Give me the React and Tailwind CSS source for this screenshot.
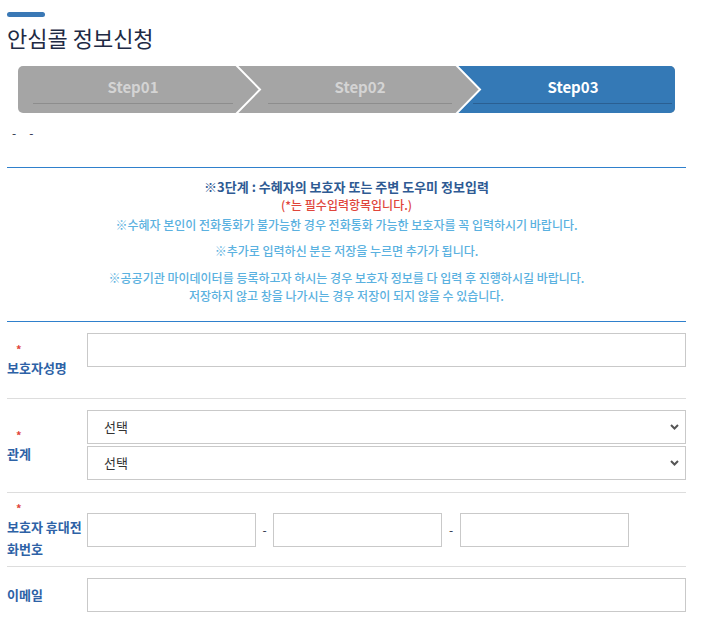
import { useState } from "react";

const Req = () => (
  <div className="pl-[9px] text-[11px] leading-[16px] text-[#e0453b]">*</div>
);

const Label = ({ required, children }) => (
  <div className="w-[80px] shrink-0 text-[13px] font-bold leading-[22px] text-[#2d62a6]">
    {required && <Req />}
    <div>{children}</div>
  </div>
);

const Field = ({ className = "" }) => (
  <input
    type="text"
    className={`h-[34px] border border-[#c9c9c9] bg-white px-2 text-[13px] outline-none ${className}`}
  />
);

const Select = ({ value, onChange }) => (
  <div className="relative">
    <select
      value={value}
      onChange={(e) => onChange(e.target.value)}
      className="h-[34px] w-full appearance-none border border-[#c9c9c9] bg-white pl-[16px] text-[13px] text-[#333] outline-none"
    >
      <option value="">선택</option>
      <option value="parent">부모</option>
      <option value="child">자녀</option>
      <option value="etc">기타</option>
    </select>
    <svg
      className="pointer-events-none absolute right-[7px] top-[14px]"
      width="9"
      height="6"
      viewBox="0 0 9 6"
    >
      <polyline points="1,1 4.5,4.5 8,1" fill="none" stroke="#555" strokeWidth="2" />
    </svg>
  </div>
);

const steps = [
  { name: "Step01", seg: "w-[230px]", text: "", line: "mx-[15px]" },
  { name: "Step02", seg: "w-[208px]", text: "pl-[16px]", line: "ml-[20px] mr-[4px]" },
];

export default function App() {
  const [rel1, setRel1] = useState("");
  const [rel2, setRel2] = useState("");

  return (
    <div className="min-h-screen bg-white font-['Noto_Sans_CJK_KR','Noto_Sans',sans-serif] text-[#333]">
      <div className="ml-[7px] w-[679px] pt-[12px]">
        {/* title */}
        <div className="h-[5px] w-[38px] rounded-full bg-[#3a78b5]" />
        <h1 className="mt-[8px] text-[22px] font-normal leading-[24px] text-[#1e2a44]">
          안심콜 정보신청
        </h1>

        {/* steps */}
        <div className="relative mx-[11px] mt-[17px] flex h-[47px] overflow-hidden rounded-[5px] bg-[#a5a5a5]">
          {steps.map((s) => (
            <div key={s.name} className={`flex shrink-0 flex-col pt-[11px] ${s.seg}`}>
              <span className={`text-center text-[15px] font-bold leading-[20px] text-[#d4d4d4] ${s.text}`}>
                {s.name}
              </span>
              <div className={`mt-[6px] border-b border-[#8d8d8d] ${s.line}`} />
            </div>
          ))}
          <div className="flex flex-1 flex-col bg-[#3479b6] pt-[11px] [clip-path:polygon(0_0,100%_0,100%_100%,0_100%,24px_50%)]">
            <span className="pl-[15px] text-center text-[15px] font-bold leading-[20px] text-white">
              Step03
            </span>
            <div className="ml-[17px] mr-[3px] mt-[6px] border-b border-[#2a5f92]" />
          </div>
          <svg className="pointer-events-none absolute inset-0" width="657" height="47" viewBox="0 0 657 47">
            <polyline points="218,-1 242,23.5 218,48" fill="none" stroke="#fff" strokeWidth="2" />
            <polyline points="438,-1 462,23.5 438,48" fill="none" stroke="#fff" strokeWidth="2" />
          </svg>
        </div>

        <div className="mt-[13px] flex gap-[13px] pl-[5px] text-[12px] leading-[14px] text-[#1e2a44]">
          <span>-</span>
          <span>-</span>
        </div>

        {/* notice */}
        <div className="mt-[27px] h-px bg-[#2f80cc]" />
        <div className="pb-[16px] pt-[10px] text-center text-[12px] font-medium leading-[18px] text-[#5ab1e0]">
          <p className="text-[13px] font-bold text-[#2e5a93]">
            ※3단계 : 수혜자의 보호자 또는 주변 도우미 정보입력
          </p>
          <p className="text-[#e0453b]">(*는 필수입력항목입니다.)</p>
          <p className="mt-[2px]">
            ※수혜자 본인이 전화통화가 불가능한 경우 전화통화 가능한 보호자를 꼭 입력하시기 바랍니다.
          </p>
          <p className="mt-[8px]">※추가로 입력하신 분은 저장을 누르면 추가가 됩니다.</p>
          <p className="mt-[9px]">
            ※공공기관 마이데이터를 등록하고자 하시는 경우 보호자 정보를 다 입력 후 진행하시길 바랍니다.
            <br />
            저장하지 않고 창을 나가시는 경우 저장이 되지 않을 수 있습니다.
          </p>
        </div>
        <div className="h-px bg-[#2f80cc]" />

        {/* form */}
        <div className="flex items-center border-b border-[#dddddd]">
          <Label required>보호자성명</Label>
          <div className="flex-1 pb-[11px] pt-[11px]">
            <Field className="w-full" />
            <div className="h-[20px]" />
          </div>
        </div>

        <div className="flex items-center border-b border-[#dddddd]">
          <Label required>관계</Label>
          <div className="flex flex-1 flex-col gap-[2px] pb-[12px] pt-[11px]">
            <Select value={rel1} onChange={setRel1} />
            <Select value={rel2} onChange={setRel2} />
          </div>
        </div>

        <div className="flex items-center border-b border-[#dddddd]">
          <Label required>보호자 휴대전화번호</Label>
          <div className="flex flex-1 items-center pb-[19px] pt-[20px]">
            <Field className="w-[169px]" />
            <span className="w-[17px] text-center text-[12px] text-[#1e2a44]">-</span>
            <Field className="w-[169px]" />
            <span className="w-[18px] text-center text-[12px] text-[#1e2a44]">-</span>
            <Field className="w-[169px]" />
          </div>
        </div>

        <div className="flex items-center">
          <Label>이메일</Label>
          <div className="flex-1 py-[11px]">
            <Field className="w-full" />
          </div>
        </div>
      </div>
    </div>
  );
}
